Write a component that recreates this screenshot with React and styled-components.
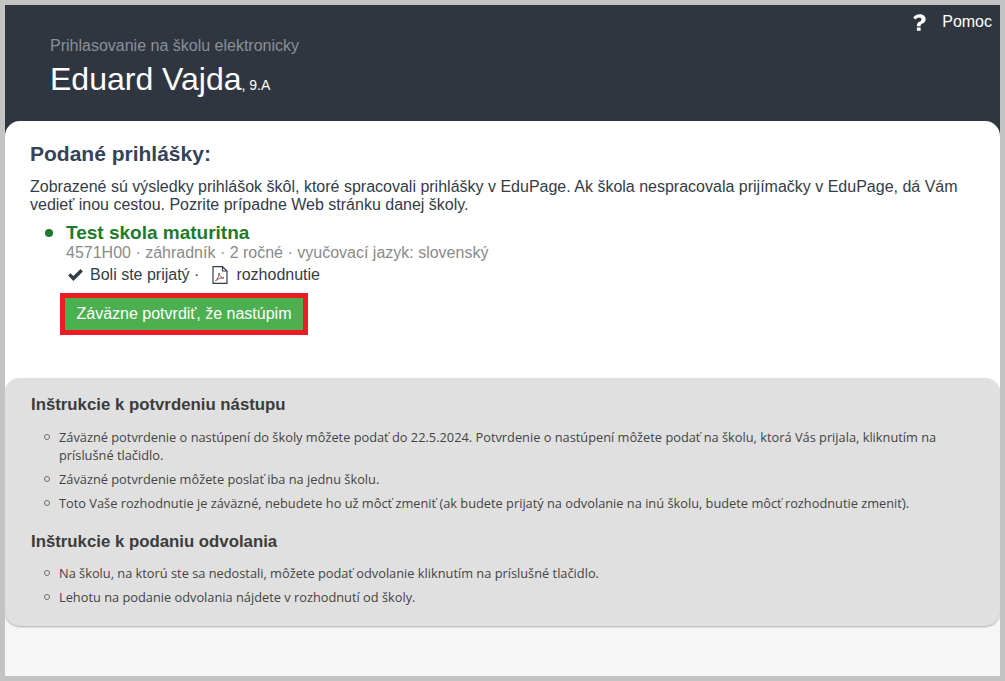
import React from 'react';
import styled, { createGlobalStyle } from 'styled-components';

const GlobalStyle = createGlobalStyle`
  html, body {
    margin: 0;
    padding: 0;
    background: #c3c3c3;
  }
  body {
    font-family: "Liberation Sans", Arial, sans-serif;
    overflow: hidden;
  }
`;

const Frame = styled.div`
  width: 995px;
  height: 671px;
  margin: 5px;
  background: #f6f6f6;
  overflow: hidden;
  display: flex;
  flex-direction: column;
`;

const Header = styled.header`
  height: 131px;
  margin-bottom: -15px;
  flex: none;
  box-sizing: border-box;
  background: #303640;
  padding: 32px 8px 0 45px;
  position: relative;
`;

const HelpLink = styled.a`
  position: absolute;
  top: 7px;
  right: 8px;
  display: flex;
  align-items: center;
  gap: 16px;
  color: #fff;
  font-size: 16px;
  line-height: 20px;
`;

const HeaderSub = styled.div`
  color: #8b8f96;
  font-size: 16px;
  line-height: 18px;
`;

const HeaderName = styled.div`
  color: #fff;
  font-size: 32px;
  line-height: 36px;
  margin-top: 6px;
  small {
    font-size: 14px;
  }
`;

const Applications = styled.section`
  position: relative;
  height: 272px;
  margin-bottom: -15px;
  flex: none;
  box-sizing: border-box;
  background: #fff;
  border-radius: 15px 15px 0 0;
  padding: 21px 25px 0;
`;

const Title = styled.h2`
  margin: 0;
  color: #34425a;
  font-size: 21px;
  line-height: 24px;
  font-weight: bold;
`;

const Intro = styled.p`
  margin: 12px 0 0;
  color: #333c48;
  font-size: 16px;
  line-height: 18px;
`;

const School = styled.div`
  margin: 9px 0 0 15px;
`;

const SchoolName = styled.div`
  display: flex;
  align-items: center;
  color: #1f7a2c;
  font-size: 19px;
  font-weight: bold;
  line-height: 20px;
  &::before {
    content: '';
    width: 8px;
    height: 8px;
    border-radius: 50%;
    background: #1f7a2c;
    margin-right: 13px;
  }
`;

const SchoolMeta = styled.div`
  margin: 1px 0 0 21px;
  color: #8a8a8a;
  font-size: 16px;
  line-height: 18px;
`;

const Status = styled.div`
  display: flex;
  align-items: center;
  margin: 3px 0 0 23px;
  color: #333c48;
  font-size: 16px;
  line-height: 20px;
`;

const PdfIcon = styled.svg`
  margin: 0 8px 0 13px;
`;

const CheckIcon = styled.svg`
  margin-right: 7px;
`;

const ConfirmOutline = styled.div`
  display: block;
  width: 248px;
  margin: 8px 0 0 15px;
  border: 5px solid #ed1c24;
  box-sizing: border-box;
`;

const ConfirmButton = styled.button`
  display: block;
  width: 238px;
  height: 32px;
  border: 0;
  padding: 0;
  background: #4caf50;
  color: #fff;
  font-family: inherit;
  font-size: 16px;
`;

const Instructions = styled.section`
  position: relative;
  flex: none;
  height: 248px;
  box-sizing: border-box;
  background: #e0e0e0;
  border-radius: 15px;
  box-shadow: 0 1px 2px rgba(0, 0, 0, 0.3);
  padding: 17px 26px 0;
`;

const InstructionTitle = styled.h3`
  margin: 0;
  color: #3c3c3c;
  font-size: 16.8px;
  line-height: 20px;
  font-weight: bold;
`;

const InstructionList = styled.ul`
  list-style: none;
  margin: ${(p) => p.$top}px 0 ${(p) => p.$gap}px;
  padding: 0 0 0 13px;
  color: #444;
  font-family: "Open Sans", sans-serif;
  font-size: 12.8px;
  line-height: 18px;
`;

const InstructionItem = styled.li`
  display: flex;
  gap: 9px;
  margin-bottom: 6px;
  &::before {
    content: '';
    flex: none;
    box-sizing: border-box;
    width: 6px;
    height: 6px;
    margin-top: 6px;
    border: 1px solid #6f6f6f;
    border-radius: 50%;
  }
`;

const App = () => (
  <>
    <GlobalStyle />
    <Frame>
      <Header>
        <HelpLink>
          <svg width="13" height="17" viewBox="0 0 14 18" aria-hidden="true">
            <path fill="#fff" d="M7.200 0C3.900 0 1.800 1.400.2 3.800l2.600 2c1-1.300 2-2.100 3.800-2.100 1.400 0 2.500.8 2.500 2 0 1-.7 1.600-1.900 2.300C5.600 8.800 4.200 9.900 4.200 12v1h4v-.7c0-.9.6-1.400 1.800-2.100C12 9.100 13.700 7.800 13.700 5.400 13.700 2.100 10.500 0 7.200 0zM4.200 14.500H8.200V18H4.200z" />
          </svg>
          Pomoc
        </HelpLink>
        <HeaderSub>Prihlasovanie na školu elektronicky</HeaderSub>
        <HeaderName>Eduard Vajda<small>, 9.A</small></HeaderName>
      </Header>
      <Applications>
        <Title>Podané prihlášky:</Title>
        <Intro>
          Zobrazené sú výsledky prihlášok škôl, ktoré spracovali prihlášky v EduPage. Ak škola nespracovala prijímačky v EduPage, dá Vám
          vedieť inou cestou. Pozrite prípadne Web stránku danej školy.
        </Intro>
        <School>
          <SchoolName>Test skola maturitna</SchoolName>
          <SchoolMeta>4571H00 · záhradník · 2 ročné · vyučovací jazyk: slovenský</SchoolMeta>
          <Status>
            <CheckIcon width="15" height="12" viewBox="0 0 15 12" aria-hidden="true">
              <path fill="#333c48" d="M5.400 11.900.1 6.600l2.400-2.400 2.900 2.900L12.500.1l2.400 2.400z" />
            </CheckIcon>
            Boli ste prijatý ·
            <PdfIcon width="16" height="18" viewBox="0 0 16 18" aria-hidden="true">
              <path fill="none" stroke="#333c48" strokeWidth="1.200" d="M1 .6h9.500L15 5v12.400H1zM10.500.6V5H15" />
              <path fill="none" stroke="#8a5a50" d="M3.500 15c2-1.500 3.500-5 3.500-8 .5 3 2 4.500 5 5-3-.3-6.500.6-8.500 3z" />
            </PdfIcon>
            rozhodnutie
          </Status>
          <ConfirmOutline>
            <ConfirmButton>Záväzne potvrdiť, že nastúpim</ConfirmButton>
          </ConfirmOutline>
        </School>
      </Applications>
      <Instructions>
        <InstructionTitle>Inštrukcie k potvrdeniu nástupu</InstructionTitle>
        <InstructionList $top={13} $gap={20}>
          <InstructionItem><span>Záväzné potvrdenie o nastúpení do školy môžete podať do 22.5.2024. Potvrdenie o nastúpení môžete podať na školu, ktorá Vás prijala, kliknutím na príslušné tlačidlo.</span></InstructionItem>
          <InstructionItem><span>Záväzné potvrdenie môžete poslať iba na jednu školu.</span></InstructionItem>
          <InstructionItem><span>Toto Vaše rozhodnutie je záväzné, nebudete ho už môcť zmeniť (ak budete prijatý na odvolanie na inú školu, budete môcť rozhodnutie zmeniť).</span></InstructionItem>
        </InstructionList>
        <InstructionTitle>Inštrukcie k podaniu odvolania</InstructionTitle>
        <InstructionList $top={12} $gap={0}>
          <InstructionItem><span>Na školu, na ktorú ste sa nedostali, môžete podať odvolanie kliknutím na príslušné tlačidlo.</span></InstructionItem>
          <InstructionItem><span>Lehotu na podanie odvolania nájdete v rozhodnutí od školy.</span></InstructionItem>
        </InstructionList>
      </Instructions>
    </Frame>
  </>
);

export default App;
